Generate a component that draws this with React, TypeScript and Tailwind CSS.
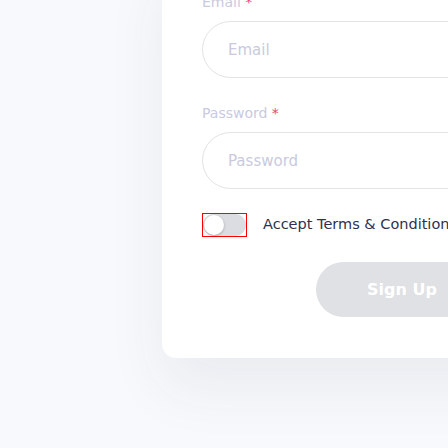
import { useState } from "react";

function Field({ label, placeholder, type }: { label: string; placeholder: string; type: string }) {
  return (
    <div className="flex flex-col">
      <label className="h-5 text-[14px] leading-5 text-[#c9cae0] mb-[9px]">
        {label} <span className="text-[#e8457c]">*</span>
      </label>
      <input
        type={type}
        placeholder={placeholder}
        className="h-[57px] w-full rounded-full border border-[#e3e3e6] bg-white px-[25px] text-[15px] text-[#2e3150] outline-none placeholder:text-[#c9cae0]"
      />
    </div>
  );
}

function Toggle({ on, onChange }: { on: boolean; onChange: () => void }) {
  return (
    <span
      role="switch"
      aria-checked={on}
      onClick={onChange}
      className="inline-block h-6 w-[45px] shrink-0 cursor-pointer bg-white p-px shadow-[inset_0_0_0_1px_#ff0000]"
    >
      <span
        className={
          "flex h-full w-full items-center rounded-full " +
          (on ? "justify-end bg-[#3d5afe]" : "justify-start bg-[#dcdde2]")
        }
      >
        <span className="ml-px h-5 w-5 rounded-full bg-white shadow-[0_1px_3px_rgba(0,0,0,0.25)]" />
      </span>
    </span>
  );
}

export default function App() {
  const [accepted, setAccepted] = useState(false);

  return (
    <main
      className="h-[448px] w-[448px] overflow-hidden bg-[#f8f9fc]"
      style={{ fontFamily: '"DejaVu Sans", sans-serif' }}
    >
      <div className="pl-[162px]">
        <div className="-mt-[48px] w-[480px] rounded-[14px] bg-white px-10 pt-10 pb-[41px] shadow-[0_30px_60px_rgba(40,50,90,0.07)]">
          <div className="flex flex-col gap-[25px]">
            <Field label="Email" placeholder="Email" type="email" />
            <Field label="Password" placeholder="Password" type="password" />
          </div>

          <div className="mt-6 flex items-center gap-4">
            <Toggle on={accepted} onChange={() => setAccepted(!accepted)} />
            <span className="whitespace-nowrap text-[14.5px] text-[#2e3150]">Accept Terms &amp; Conditions</span>
          </div>

          <div className="mt-[25px] flex justify-center">
            <div className="flex h-[55px] w-[172px] items-center justify-center rounded-full bg-[#e0e1e5] text-[16px] font-bold text-white">
              Sign Up
            </div>
          </div>
        </div>
      </div>
    </main>
  );
}
